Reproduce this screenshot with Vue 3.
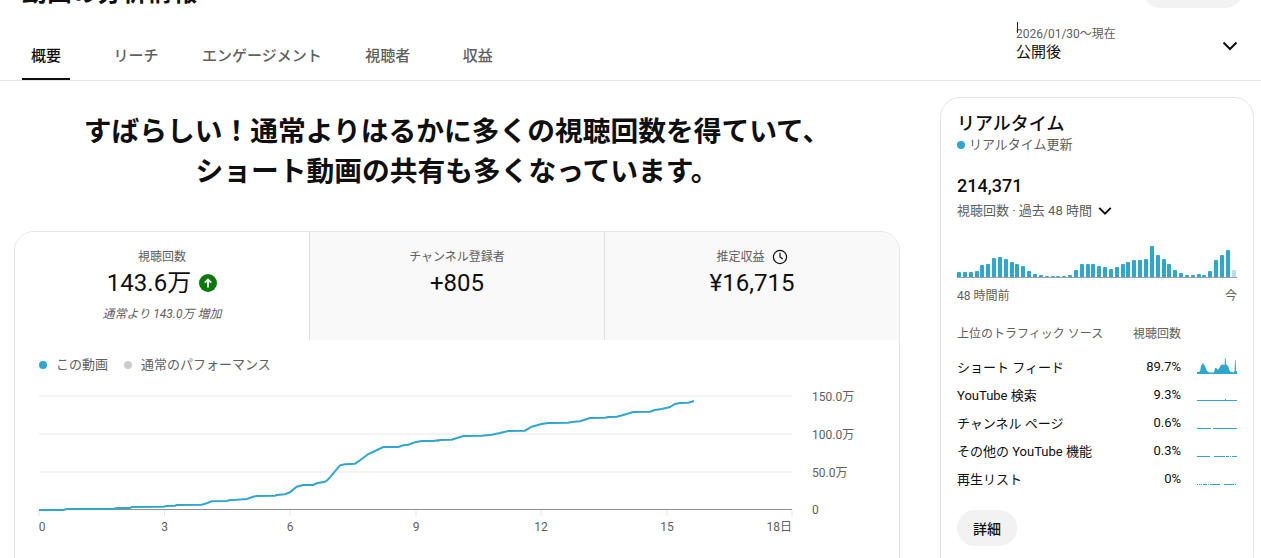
<template>
  <div class="page">
    <header class="top">
      <h1 class="title">動画の分析情報</h1>
      <div class="top-btn"></div>
    </header>

    <nav class="tabbar">
      <div class="tabs">
        <a v-for="(t, i) in tabs" :key="t" class="tab" :class="{ active: i === 0 }">{{ t }}</a>
      </div>
      <div class="period">
        <span class="cursor"></span>
        <div class="period-text">
          <div class="period-date">2026/01/30〜現在</div>
          <div class="period-name">公開後</div>
        </div>
        <svg class="period-chev" width="24" height="24" viewBox="0 0 24 24">
          <path d="M5.5 8.5 12 15l6.5-6.5" fill="none" stroke="#0f0f0f" stroke-width="2" />
        </svg>
      </div>
    </nav>

    <main class="main">
      <section class="left">
        <h2 class="headline">すばらしい！通常よりはるかに多くの視聴回数を得ていて、<br />ショート動画の共有も多くなっています。</h2>

        <div class="card">
          <div class="metrics">
            <div class="metric on">
              <div class="m-label">視聴回数</div>
              <div class="m-value">
                143.6万
                <svg class="up" width="18" height="18" viewBox="0 0 18 18">
                  <circle cx="9" cy="9" r="9" fill="#0b7a0b" />
                  <path d="M9 13.5V5.5M5.8 8.6 9 5.4l3.2 3.2" fill="none" stroke="#fff" stroke-width="1.8" />
                </svg>
              </div>
              <div class="m-note">通常より 143.0万 増加</div>
            </div>
            <div class="metric">
              <div class="m-label">チャンネル登録者</div>
              <div class="m-value">+805</div>
            </div>
            <div class="metric">
              <div class="m-label">
                推定収益
                <svg class="clock" width="16" height="16" viewBox="0 0 16 16">
                  <circle cx="8" cy="8" r="6.6" fill="none" stroke="#0f0f0f" stroke-width="1.2" />
                  <path d="M8 3.8V8l2.8 2" fill="none" stroke="#0f0f0f" stroke-width="1.2" />
                </svg>
              </div>
              <div class="m-value">¥16,715</div>
            </div>
          </div>

          <div class="legend">
            <span class="lg"><i class="dot blue"></i>この動画</span>
            <span class="lg"><i class="dot grey"></i>通常のパフォーマンス</span>
          </div>

          <svg class="chart" width="884" height="168" viewBox="15 385 884 168">
            <line v-for="y in [396, 434, 472]" :key="y" x1="39" x2="792" :y1="y" :y2="y" stroke="#f0f0f0" stroke-width="1.5" />
            <line x1="39" x2="792" y1="509.5" y2="509.5" stroke="#909090" />
            <line v-for="x in ticks" :key="x.v" :x1="x.x" :x2="x.x" y1="510" y2="516" stroke="#e5e5e5" />
            <polyline :points="linePoints" fill="none" stroke="#2fa6cf" stroke-width="2" />
            <text v-for="x in ticks" :key="'t' + x.v" class="ax" :x="x.x + (x.v === '0' ? 3 : 0)" y="531" :text-anchor="x.v === '18日' ? 'end' : 'middle'">{{ x.v }}</text>
            <text v-for="l in yLabels" :key="l.t" class="ax" x="812" :y="l.y">{{ l.t }}</text>
          </svg>
        </div>
      </section>

      <aside class="rt">
        <div class="rt-title">リアルタイム</div>
        <div class="rt-live"><i class="dot blue"></i>リアルタイム更新</div>
        <div class="rt-num">214,371</div>
        <div class="rt-sub">
          視聴回数 · 過去 48 時間
          <svg width="16" height="16" viewBox="0 0 18 18">
            <path d="M2.5 5.5 9 12l6.5-6.5" fill="none" stroke="#0f0f0f" stroke-width="2.2" />
          </svg>
        </div>

        <div class="bars">
          <span
            v-for="(h, i) in barHeights"
            :key="i"
            class="bar"
            :class="{ live: i === barHeights.length - 1 }"
            :style="{ height: h + 'px' }"
          ></span>
        </div>
        <div class="bars-axis"><span>48 時間前</span><span>今</span></div>

        <div class="src-head"><span>上位のトラフィック ソース</span><span class="src-views">視聴回数</span></div>
        <div class="src-list">
          <div v-for="r in sources" :key="r.name" class="src-row">
            <span class="src-name">{{ r.name }}</span>
            <span class="src-val">{{ r.val }}</span>
            <svg class="spark" width="40" height="18" viewBox="0 0 40 18">
              <polygon v-if="r.area" :points="r.area" fill="#2fa6cf" />
              <line v-else x1="0" x2="40" y1="15.5" y2="15.5" stroke="#2fa6cf" :stroke-dasharray="r.dash" />
              <line v-if="r.spike" x1="28.5" x2="28.5" y1="14" y2="15" stroke="#2fa6cf" />
            </svg>
          </div>
        </div>

        <button class="more">詳細</button>
      </aside>
    </main>
  </div>
</template>

<script setup>
const tabs = ['概要', 'リーチ', 'エンゲージメント', '視聴者', '収益']

const ticks = [
  { v: '0', x: 39 },
  { v: '3', x: 164.5 },
  { v: '6', x: 290 },
  { v: '9', x: 416 },
  { v: '12', x: 541 },
  { v: '15', x: 667 },
  { v: '18日', x: 792 },
]

const yLabels = [
  { t: '150.0万', y: 401 },
  { t: '100.0万', y: 439 },
  { t: '50.0万', y: 477 },
  { t: '0', y: 514 },
]

// read off the zoomed reference (3x crops)
const left = [[57,375],[130,375],[140,372],[280,372],[290,369],[330,369],[335,366],[430,365],[440,363],[465,362],[470,360],[545,359],[560,355],[575,349],[620,348],[630,345],[650,344],[680,342],[700,335],[710,333],[765,332],[770,330],[795,328],[810,322],[830,305],[850,300],[880,300],[890,295],[915,290],[925,283],[960,241],[975,238],[1005,236],[1020,226],[1045,207],[1065,198],[1090,186],[1135,186],[1150,181],[1165,179],[1185,172],[1205,168],[1240,168],[1260,165]]
const right = [[50,168],[60,165],[95,164],[130,153],[185,152],[215,149],[240,144],[265,138],[315,137],[335,125],[365,117],[385,114],[445,113],[455,111],[480,109],[510,99],[555,98],[565,96],[590,95],[610,90],[640,81],[690,80],[705,75],[725,72],[750,66],[765,57],[780,54],[805,53],[822,48]]
const linePoints = [
  ...left.map(([x, y]) => `${(x / 3 + 20).toFixed(1)},${(y / 3 + 385).toFixed(1)}`),
  ...right.map(([x, y]) => `${(x / 3 + 420).toFixed(1)},${(y / 3 + 385).toFixed(1)}`),
].join(' ')

const barTops = [130,130,130,127,108,105,88,85,91,100,106,112,127,136,139,142,142,142,142,139,124,106,106,106,112,115,121,115,106,100,94,94,91,52,79,91,106,124,133,139,139,136,139,127,94,79,64,124]
const barHeights = barTops.map((t) => Math.round(((144 - t) / 3) * 10) / 10)

const sources = [
  { name: 'ショート フィード', val: '89.7%', area: '0,17 0,15 3,14.5 4,9 6,6 8,9 10,14 12,15.5 17,15.5 18,11 20,11.5 21,13 24,8 26,7.5 27.6,8 28,1 28.6,1 29,7 31,9 33,14.5 37,15.5 37.5,14 38,3 38.6,3 39,14 40,14 40,17' },
  { name: 'YouTube 検索', val: '9.3%', dash: '40', spike: true },
  { name: 'チャンネル ページ', val: '0.6%', dash: '14 2 24' },
  { name: 'その他の YouTube 機能', val: '0.3%', dash: '13 4 11 1 3 1 1 1 5' },
  { name: '再生リスト', val: '0%', dash: '1 1 1 1 1 1 4 1 1 1 10 4 10' },
]
</script>

<style>
html, body { margin: 0; background: #fff; overflow: hidden; }
</style>

<style scoped>
.page {
  width: 1261px;
  height: 558px;
  overflow: hidden;
  color: #0f0f0f;
  font-family: Roboto, "Noto Sans CJK JP", sans-serif;
  font-size: 13px;
}

.top {
  display: flex;
  justify-content: space-between;
  margin-top: -28px;
  padding: 0 18px 0 22px;
  height: 36px;
}
.title {
  margin: 0;
  font-size: 25px;
  line-height: 42px;
  font-weight: 700;
}
.top-btn {
  width: 100px;
  height: 36px;
  border-radius: 18px;
  background: #f2f2f2;
}

.tabbar {
  display: flex;
  justify-content: space-between;
  height: 72px;
  border-bottom: 1px solid #e5e5e5;
}
.tabs {
  display: flex;
  align-items: flex-end;
  gap: 42px;
  padding-left: 22px;
}
.tab {
  min-width: 48px;
  height: 49px;
  line-height: 50px;
  text-align: center;
  font-size: 15px;
  font-weight: 500;
  color: #606060;
}
.tab.active {
  color: #0f0f0f;
  border-bottom: 2px solid #0f0f0f;
  height: 47px;
}

.period {
  position: relative;
  display: flex;
  width: 245px;
  padding-top: 17px;
  box-sizing: border-box;
}
.cursor {
  position: absolute;
  left: 1px;
  top: 14px;
  width: 1px;
  height: 11px;
  background: #222;
}
.period-text { flex: 1; }
.period-date {
  font-size: 12px;
  line-height: 18px;
  color: #606060;
}
.period-name {
  font-size: 15px;
  line-height: 19px;
}
.period-chev { margin: 9px 19px 0 0; }

.main {
  display: flex;
  padding-left: 14px;
  gap: 40px;
}
.left { width: 886px; }
.headline {
  margin: 31px 0 0;
  text-align: center;
  font-size: 27.75px;
  line-height: 40px;
  font-weight: 700;
}

.card {
  margin-top: 39px;
  border: 1px solid #e5e5e5;
  border-radius: 20px 20px 0 0;
  height: 345px;
  box-sizing: border-box;
  overflow: hidden;
}
.metrics {
  display: grid;
  grid-template-columns: 294px 295px 1fr;
  height: 108px;
}
.metric {
  background: #f9f9f9;
  text-align: center;
  padding-top: 16px;
  box-sizing: border-box;
  border-left: 1px solid #e0e0e0;
}
.metric.on {
  background: #fff;
  border-left: 0;
}
.m-label {
  display: flex;
  justify-content: center;
  align-items: center;
  gap: 7px;
  font-size: 12px;
  line-height: 18px;
  color: #606060;
}
.m-value {
  display: flex;
  justify-content: center;
  align-items: center;
  gap: 8px;
  font-size: 24px;
  line-height: 34px;
}
.m-note {
  margin-top: 5px;
  font-size: 12px;
  line-height: 18px;
  font-style: italic;
  color: #606060;
}

.legend {
  display: flex;
  gap: 16px;
  padding: 16px 0 0 24px;
  font-size: 13px;
  line-height: 18px;
  color: #606060;
}
.lg { display: flex; align-items: center; }
.dot {
  display: inline-block;
  width: 8px;
  height: 8px;
  border-radius: 50%;
  margin-right: 9px;
}
.dot.blue { background: #2fa6cf; }
.dot.grey { background: #ccc; }

.chart { display: block; margin-top: 11px; }
.ax {
  font-size: 12px;
  fill: #606060;
}

.rt {
  width: 314px;
  height: 480px;
  margin-top: 16px;
  padding: 14px 16px 0;
  box-sizing: border-box;
  border: 1px solid #e5e5e5;
  border-radius: 20px;
}
.rt-title {
  font-size: 18px;
  line-height: 24px;
  font-weight: 500;
}
.rt-live {
  display: flex;
  align-items: center;
  font-size: 13px;
  line-height: 18px;
  color: #606060;
}
.rt-live .dot { margin-right: 4px; }
.rt-num {
  margin-top: 20px;
  font-size: 18px;
  line-height: 24px;
  font-weight: 500;
}
.rt-sub {
  display: flex;
  align-items: center;
  gap: 5px;
  margin-top: 3px;
  font-size: 13px;
  line-height: 20px;
  color: #606060;
}

.bars {
  display: flex;
  align-items: flex-end;
  gap: 1.85px;
  height: 34px;
  margin-top: 22px;
  border-bottom: 1px solid #a0a0a0;
}
.bar {
  width: 4px;
  background: #2fa6cf;
  border-radius: 1px 1px 0 0;
}
.bar.live { background: #b5dfee; }
.bars-axis {
  display: flex;
  justify-content: space-between;
  margin-top: 9px;
  font-size: 12px;
  line-height: 18px;
  color: #606060;
}

.src-head {
  display: flex;
  margin-top: 20px;
  font-size: 12px;
  line-height: 18px;
  color: #606060;
}
.src-head > span:first-child { width: 176px; }
.src-views { width: 48px; text-align: right; }

.src-list { margin-top: 9px; }
.src-row {
  display: flex;
  align-items: center;
  height: 28px;
  font-size: 13px;
}
.src-name { width: 176px; white-space: nowrap; }
.src-val { width: 48px; text-align: right; }
.spark { margin: 0 0 0 16px; }

.more {
  display: block;
  width: 60px;
  height: 36px;
  margin-top: 18px;
  padding: 0;
  border: 0;
  border-radius: 18px;
  background: #f2f2f2;
  color: #0f0f0f;
  font-family: inherit;
  font-size: 14px;
  font-weight: 500;
}
</style>
